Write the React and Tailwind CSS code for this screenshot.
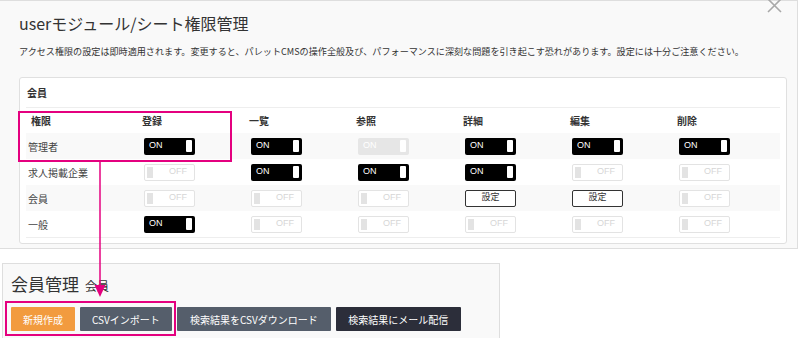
import React from 'react';

const cols = ['権限', '登録', '一覧', '参照', '詳細', '編集', '削除'];

const rows = [
  { label: '管理者', cells: ['on', 'on', 'dis', 'on', 'on', 'on'], striped: true },
  { label: '求人掲載企業', cells: ['off', 'on', 'on', 'on', 'off', 'off'] },
  { label: '会員', cells: ['off', 'off', 'off', 'btn', 'btn', 'off'], striped: true },
  { label: '一般', cells: ['on', 'off', 'off', 'off', 'off', 'off'] },
];

const Toggle = ({ kind }) => {
  if (kind === 'btn') {
    return (
      <div className="w-[51px] h-[17px] rounded-[2px] border border-[#333] bg-white flex items-center justify-center text-[9px] text-[#333]">
        設定
      </div>
    );
  }
  if (kind === 'off') {
    return (
      <div className="w-[51px] h-[17px] rounded-[2px] border border-[#e3e3e3] bg-white flex items-center justify-between pl-[2px] pr-[7px]">
        <span className="w-[6px] h-[11px] bg-[#e3e3e3]" />
        <span className="text-[9px] text-[#d6d6d6]">OFF</span>
      </div>
    );
  }
  const dis = kind === 'dis';
  return (
    <div
      className={`w-[51px] h-[17px] rounded-[2px] flex items-center justify-between pl-[5px] pr-[3px] ${
        dis ? 'bg-[#e6e6e6]' : 'bg-black'
      }`}
    >
      <span className="text-[9px] text-white">ON</span>
      <span className="w-[6px] h-[12px] bg-white rounded-[1px]" />
    </div>
  );
};

const App = () => {
  return (
    <div className="relative w-[800px] h-[338px] overflow-hidden bg-white text-[#333] font-['Liberation_Sans','Noto_Sans_CJK_JP',sans-serif]">
      {/* Modal */}
      <div className="relative w-[798px] h-[249px] bg-[#f9f9f9] border-t border-r border-b border-[#dedede] pt-[10px]">
        <svg className="absolute right-[15px] -top-[2px]" width="15" height="14" viewBox="0 0 15 14">
          <path d="M1 0 L14 13 M14 0 L1 13" stroke="#a8a8a8" strokeWidth="1.6" />
        </svg>
        <h1 className="pl-[19px] text-[16px] leading-[24px] font-['Noto_Sans_CJK_JP',sans-serif] text-[#333]">
          userモジュール/シート権限管理
        </h1>
        <p className="pl-[19px] mt-[9px] text-[9.1px] leading-[14px] font-['Noto_Sans_CJK_JP',sans-serif] text-[#333]">
          アクセス権限の設定は即時適用されます。変更すると、パレットCMSの操作全般及び、パフォーマンスに深刻な問題を引き起こす恐れがあります。設定には十分ご注意ください。
        </p>

        <div className="ml-[19px] mt-[19px] w-[768px] h-[167px] bg-white border border-[#e0e0e0] rounded-[3px] px-[6px]">
          <div className="h-[30px] border-b border-[#eeeeee] flex items-center pl-[1px] text-[10px] font-bold font-['Noto_Sans_CJK_JP',sans-serif]">
            会員
          </div>
          <div className="border-b border-[#eeeeee]">
            <div className="grid grid-cols-[108px_repeat(6,107px)] h-[25px] items-center text-[10px] font-bold font-['Noto_Sans_CJK_JP',sans-serif]">
              {cols.map((c, i) => (
                <div key={c} className={i === 0 ? 'pl-[5px]' : 'pl-[8px]'}>
                  {c}
                </div>
              ))}
            </div>
            {rows.map((r) => (
              <div
                key={r.label}
                className={`grid grid-cols-[108px_repeat(6,107px)] h-[26px] items-center ${r.striped ? 'bg-[#f9f9f9]' : ''}`}
              >
                <div className="pl-[2px] text-[10px] font-['Noto_Sans_CJK_JP',sans-serif] text-[#444]">{r.label}</div>
                {r.cells.map((k, i) => (
                  <div key={i} className="pl-[10px]">
                    <Toggle kind={k} />
                  </div>
                ))}
              </div>
            ))}
          </div>
        </div>
      </div>

      {/* Member management panel */}
      <div className="ml-[2px] mt-[14px] w-[498px] h-[90px] bg-[#f9f9f9] border border-[#dedede] px-[8px] pt-[7px]">
        <div className="flex items-baseline gap-[6px] font-['Noto_Sans_CJK_JP',sans-serif]">
          <span className="text-[17px] leading-[26px] text-[#333]">会員管理</span>
          <span className="text-[12px] text-[#333]">会員</span>
        </div>
        <div className="mt-[10px] flex gap-[5px] text-[10px] text-white font-['Noto_Sans_CJK_JP',sans-serif]">
          <div className="h-[24px] px-3 flex items-center bg-[#f29b3f] rounded-[1px]">新規作成</div>
          <div className="h-[24px] px-3 flex items-center bg-[#555e6b] rounded-[1px]">CSVインポート</div>
          <div className="h-[24px] w-[154px] flex items-center justify-center bg-[#555e6b] rounded-[1px]">検索結果をCSVダウンロード</div>
          <div className="h-[24px] w-[125px] flex items-center justify-center bg-[#2c2e3a] rounded-[1px]">検索結果にメール配信</div>
        </div>
      </div>

      {/* Annotation overlay */}
      <svg className="absolute left-0 top-0 pointer-events-none" width="800" height="338">
        <rect x="19" y="112" width="212" height="49" fill="none" stroke="#e4007f" strokeWidth="2" />
        <line x1="100" y1="161" x2="100" y2="288" stroke="#e4007f" strokeWidth="1.5" />
        <polygon points="94.5,285 105.5,285 100,297" fill="#e4007f" />
        <rect x="6" y="302" width="169" height="33" fill="none" stroke="#e4007f" strokeWidth="2" />
      </svg>
    </div>
  );
};

export default App;
